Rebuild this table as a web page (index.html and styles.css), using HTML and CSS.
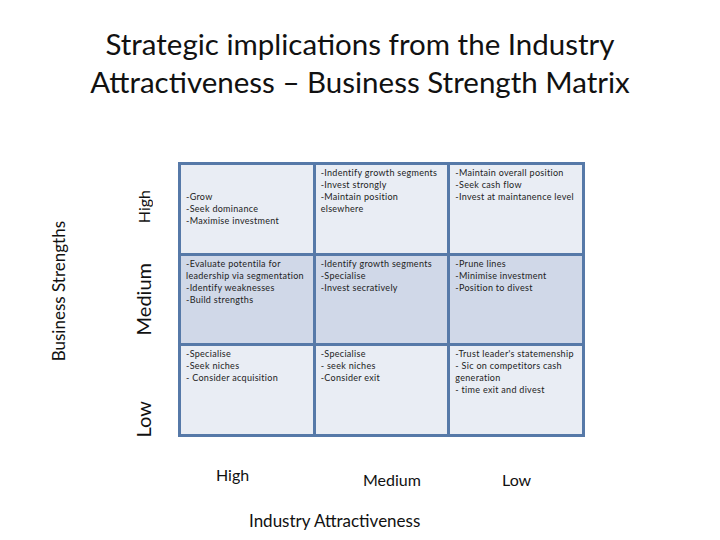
FILE: index.html
```html
<!DOCTYPE html>
<html lang="en">
<head>
    <meta charset="UTF-8">
    <meta name="viewport" content="width=device-width, initial-scale=1.0">
    <title>Strategic implications - Business Strength Matrix</title>

    <link rel="stylesheet" href="styles.css">
</head>

<body>

    <h1 class="title">
        Strategic implications from the Industry<br>
        Attractiveness &ndash; Business Strength Matrix
    </h1>

    <div class="chart">
        <div class="axis-title">Business Strengths</div>

        <div class="level level-high">High</div>
        <div class="level level-medium">Medium</div>
        <div class="level level-low">Low</div>

        <div class="matrix">
            <!-- High strength -->
            <div class="cell light center">
                -Grow<br>-Seek dominance<br>-Maximise investment
            </div>
            <div class="cell light">
                -Indentify growth segments<br>-Invest strongly<br>-Maintain position<br>elsewhere
            </div>
            <div class="cell light">
                -Maintain overall position<br>-Seek cash flow<br>-Invest at maintanence level
            </div>

            <!-- Medium strength -->
            <div class="cell dark">
                -Evaluate potentila for<br>leadership via segmentation<br>-Identify weaknesses<br>-Build strengths
            </div>
            <div class="cell dark">
                -Identify growth segments<br>-Specialise<br>-Invest secratively
            </div>
            <div class="cell dark">
                -Prune lines<br>-Minimise investment<br>-Position to divest
            </div>

            <!-- Low strength -->
            <div class="cell light">
                -Specialise<br>-Seek niches<br>- Consider acquisition
            </div>
            <div class="cell light">
                -Specialise<br>- seek niches<br>-Consider exit
            </div>
            <div class="cell light">
                -Trust leader's statemenship<br>- Sic on competitors cash<br>generation<br>- time exit and divest
            </div>
        </div>
    </div>

    <div class="x-levels">
        <div class="x-level x-high">High</div>
        <div class="x-level x-medium">Medium</div>
        <div class="x-level x-low">Low</div>
    </div>

    <div class="x-title">Industry Attractiveness</div>

</body>
</html>
```

FILE: styles.css
```css
body {
    font-family: 'Lato', 'Liberation Sans', sans-serif;
    background-color: #fff;
    color: #111;
    margin: 0;
    padding: 0;
    width: 720px;
    height: 540px;
    overflow: hidden;
}

.title {
    margin: 0;
    padding-top: 25px;
    font-size: 29.5px;
    font-weight: normal;
    line-height: 38px;
    text-align: center;
}

/* Matrix with its vertical labels */
.chart {
    display: grid;
    grid-template-columns: 20px 20px 407px;
    grid-template-rows: 92px 91px 92px;
    margin-top: 61px;
    padding-left: 48px;
}

.axis-title,
.level {
    writing-mode: vertical-rl;
    transform: rotate(180deg);
    white-space: nowrap;
}

.axis-title {
    grid-column: 1;
    grid-row: 1 / 4;
    align-self: start;
    justify-self: center;
    margin-top: 59px;
    font-size: 17px;
}

.level {
    grid-column: 2;
    justify-self: center;
    margin-left: 130px;
    font-size: 16px;
}

.level-high {
    grid-row: 1;
    align-self: end;
    margin-bottom: 31px;
}

.level-medium {
    grid-row: 2;
    align-self: center;
    font-size: 20px;
}

.level-low {
    grid-row: 3;
    align-self: end;
    font-size: 20px;
}

.matrix {
    grid-column: 3;
    grid-row: 1 / 4;
    margin-left: 90px;
    display: grid;
    grid-template-columns: 1fr 1fr 1fr;
    grid-template-rows: 1fr 1fr 1fr;
    gap: 3px;
    padding: 3px;
    background-color: #5679a8;
    width: 401px;
}

.cell {
    padding: 2px 5px;
    font-size: 9px;
    line-height: 12px;
    letter-spacing: 0.3px;
    color: #222;
}

.cell.light {
    background-color: #e9edf4;
}

.cell.dark {
    background-color: #d0d8e8;
}

.cell.center {
    display: flex;
    align-items: center;
}

/* Bottom axis */
.x-levels {
    display: grid;
    grid-template-columns: 135px 135px 137px;
    margin-left: 178px;
    margin-top: 28px;
    font-size: 16px;
}

.x-high {
    padding-left: 38px;
}

.x-medium {
    padding-left: 50px;
    padding-top: 5px;
}

.x-low {
    padding-left: 54px;
    padding-top: 5px;
}

.x-title {
    margin-top: 21px;
    margin-left: 249px;
    font-size: 17px;
}
```
